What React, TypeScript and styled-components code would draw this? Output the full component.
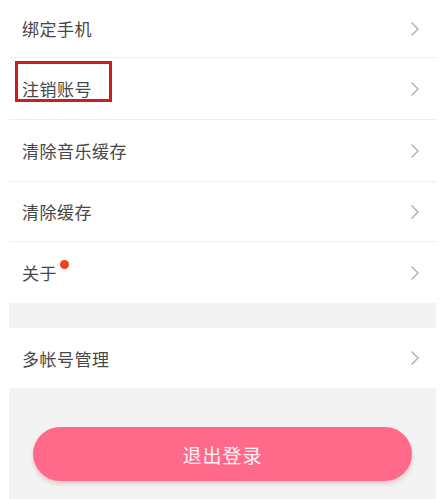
import React from "react"
import styled, { createGlobalStyle } from "styled-components"

const GlobalStyle = createGlobalStyle`
  html, body {
    margin: 0;
    padding: 0;
    background: #ffffff;
    font-family: "Noto Sans CJK SC", "Noto Sans", sans-serif;
  }
`

const Page = styled.div`
  position: relative;
  width: 427px;
  height: 499px;
  margin-left: 9px;
  background: #f3f3f3;
  display: flex;
  flex-direction: column;
  overflow: hidden;
`

const Group = styled.div`
  background: #ffffff;
  display: flex;
  flex-direction: column;
`

const Row = styled.div<{ $h?: number; $last?: boolean }>`
  height: ${(p) => p.$h ?? 60}px;
  display: flex;
  align-items: center;
  justify-content: space-between;
  padding: 0 16px 0 13px;
  border-bottom: ${(p) => (p.$last ? "none" : "1px solid #eeeeee")};
`

const Label = styled.span`
  position: relative;
  font-size: 17px;
  color: #474747;
  letter-spacing: 0.5px;
`

const Dot = styled.span`
  position: absolute;
  top: 0px;
  right: -12px;
  width: 9px;
  height: 9px;
  border-radius: 50%;
  background: #f1401c;
`

const Gap = styled.div`
  height: 25px;
`

const Footer = styled.div`
  flex: 1;
  display: flex;
  justify-content: center;
  padding-top: 39px;
`

const LogoutButton = styled.button`
  width: 379px;
  height: 54px;
  border: none;
  border-radius: 27px;
  background: #ff6a8b;
  color: #fff3f5;
  font-family: inherit;
  font-size: 19px;
  letter-spacing: 1px;
  box-shadow: 0 3px 4px rgba(200, 80, 100, 0.25);
`

const Mark = styled.div`
  position: absolute;
  left: 6px;
  top: 61px;
  width: 91px;
  height: 35px;
  border: 3px solid #cc1e22;
`

const Chevron = () => (
  <svg width="10" height="16" viewBox="0 0 10 16">
    <path d="M1.5 1.5 L8 8 L1.5 14.5" fill="none" stroke="#b4b4b4" strokeWidth="1.5" />
  </svg>
)

const top = [
  { t: "绑定手机", h: 57 },
  { t: "注销账号", h: 61 },
  { t: "清除音乐缓存", h: 61 },
  { t: "清除缓存", h: 59 },
  { t: "关于", h: 61, dot: true },
]

export default function App() {
  return (
    <>
      <GlobalStyle />
      <Page>
        <Group>
          {top.map((r, i) => (
            <Row key={r.t} $h={r.h} $last={i === top.length - 1}>
              <Label>
                {r.t}
                {r.dot && <Dot />}
              </Label>
              <Chevron />
            </Row>
          ))}
        </Group>
        <Gap />
        <Group>
          <Row $h={60} $last>
            <Label>多帐号管理</Label>
            <Chevron />
          </Row>
        </Group>
        <Footer>
          <LogoutButton>退出登录</LogoutButton>
        </Footer>
        <Mark />
      </Page>
    </>
  )
}
